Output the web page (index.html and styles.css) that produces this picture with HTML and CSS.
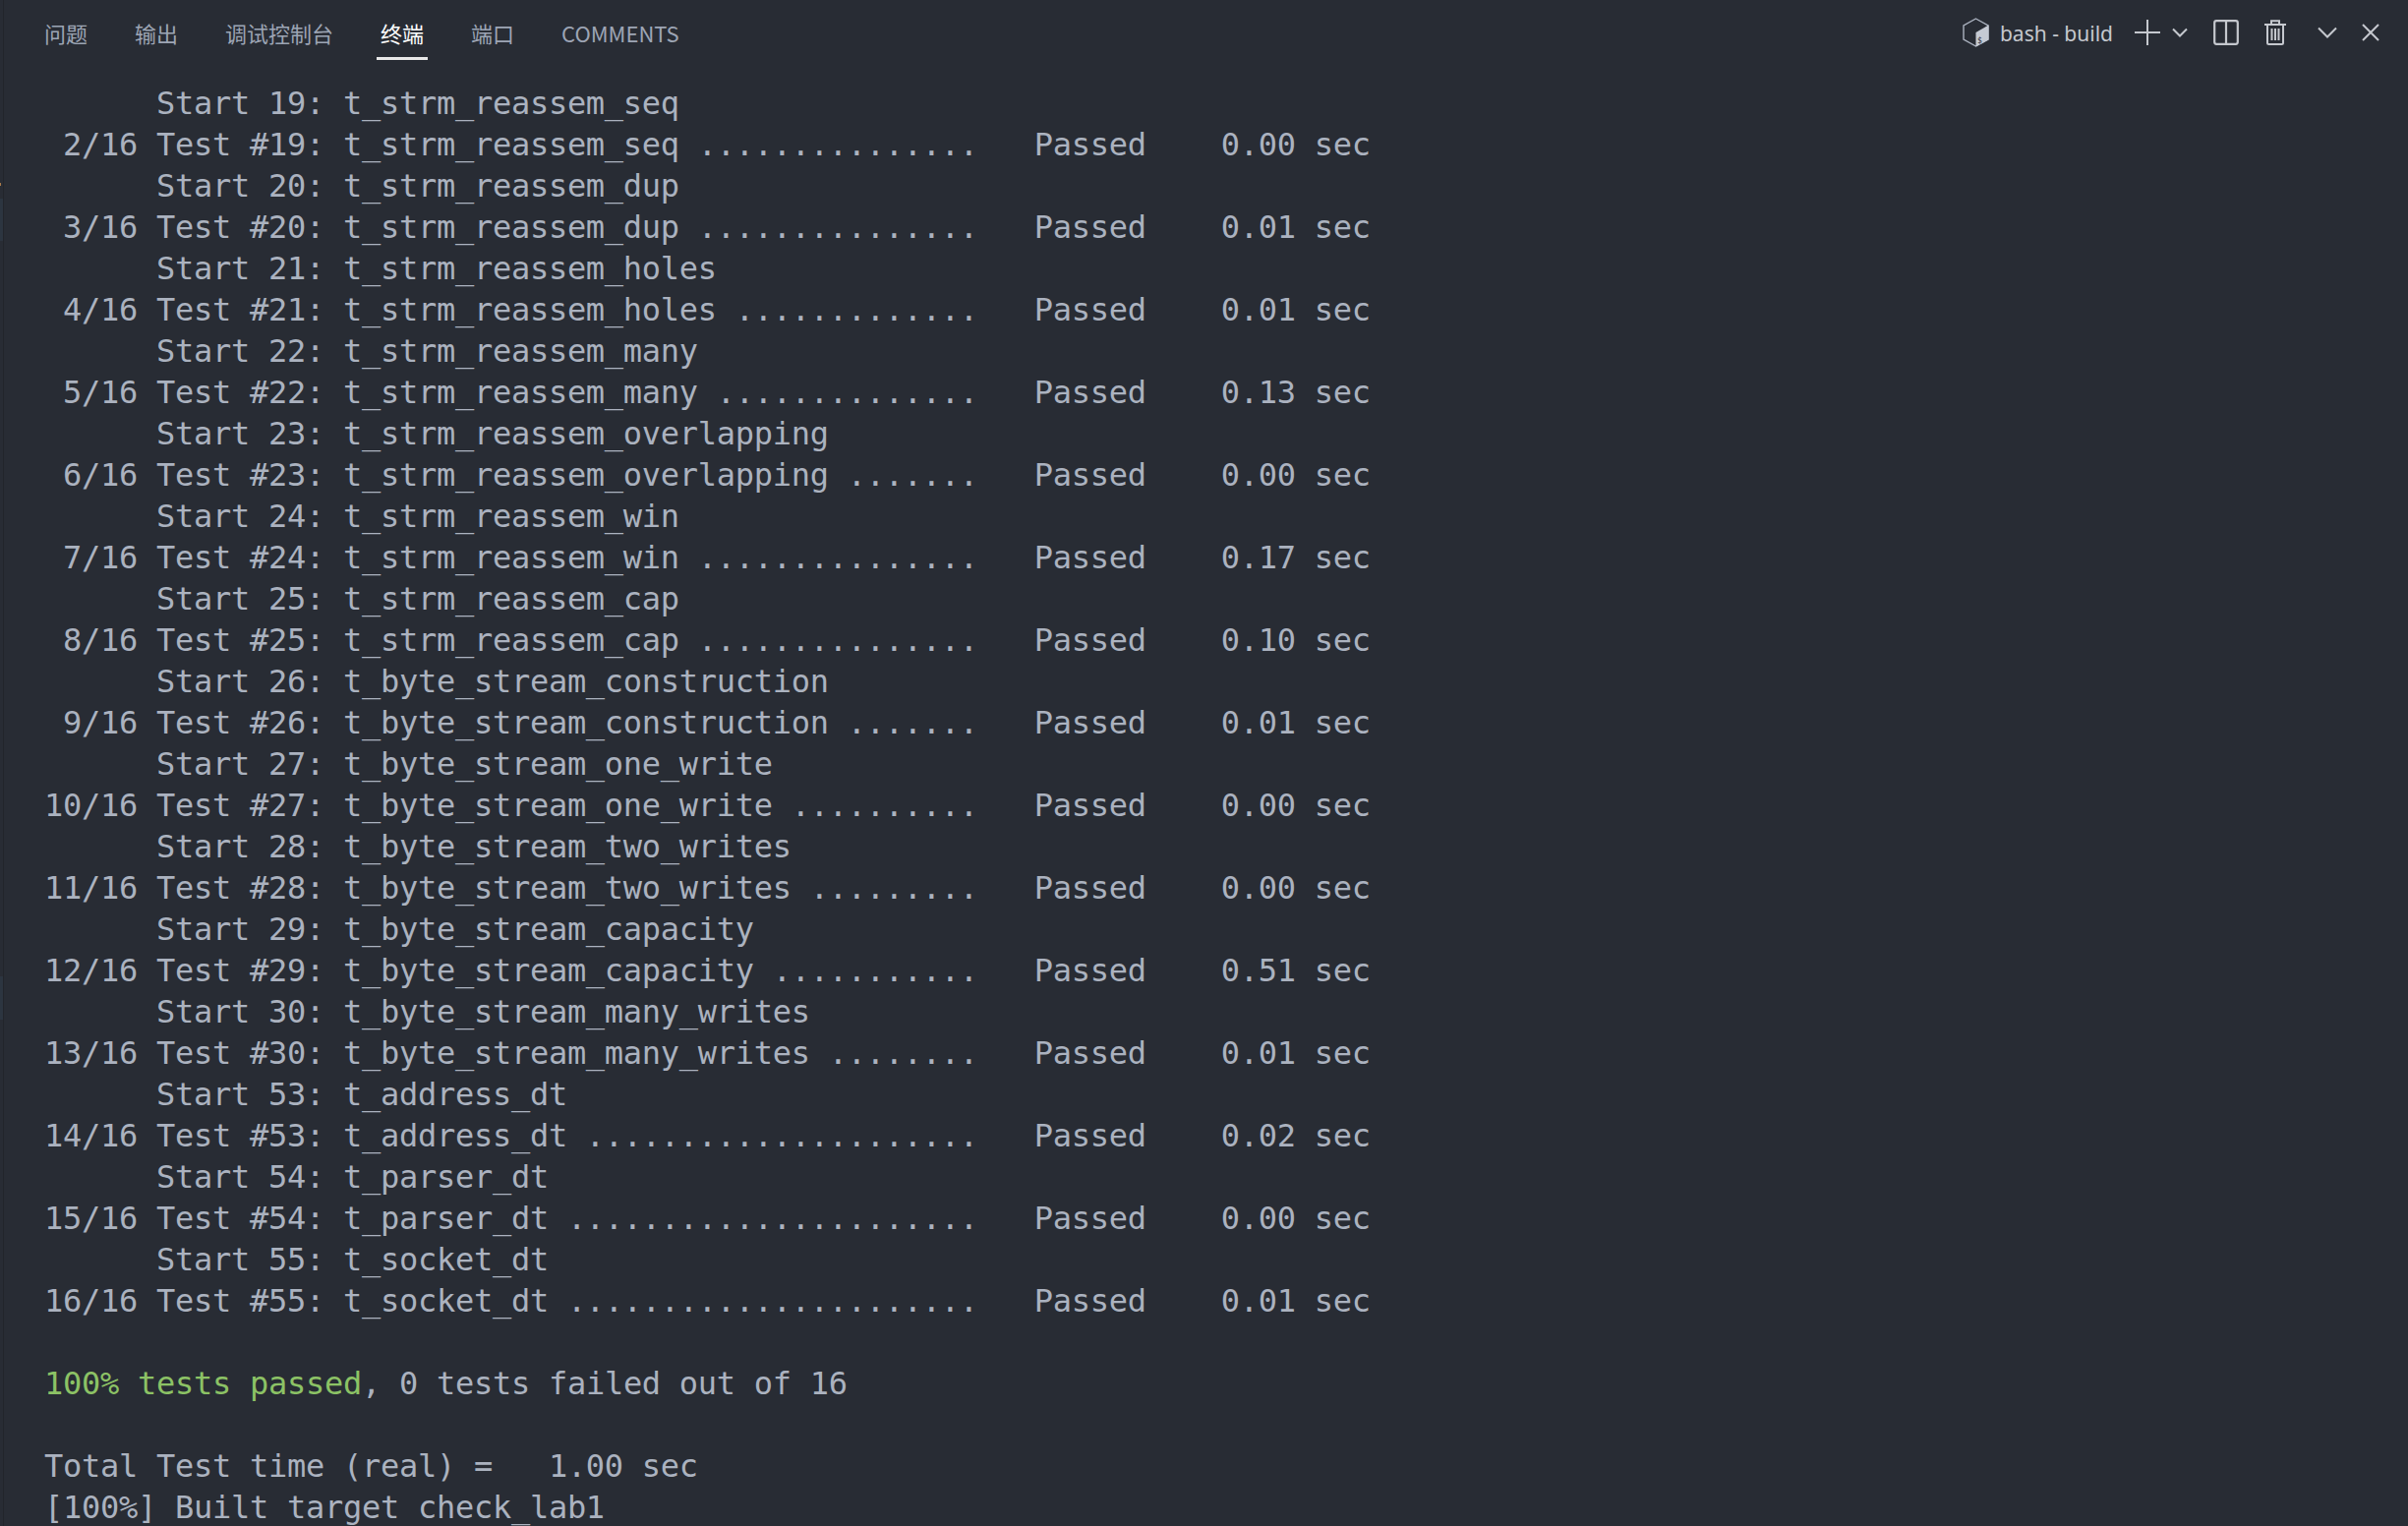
FILE: index.html
```html
<!DOCTYPE html>
<html lang="zh">
<head>
<meta charset="utf-8">
<title>Terminal</title>
<link rel="stylesheet" href="styles.css">
</head>
<body>
<i class="mark mark-tick"></i>
<i class="mark mark-a"></i>
<i class="mark mark-b"></i>
<div class="panel">
<header class="bar">
<nav class="tabs">
<span class="tab">问题</span>
<span class="tab">输出</span>
<span class="tab">调试控制台</span>
<span class="tab active">终端</span>
<span class="tab">端口</span>
<span class="tab">COMMENTS</span>
</nav>
<div class="actions">
<svg class="ic-bash" width="27" height="30" viewBox="0 0 27 30" fill="none"><path d="M13.500 1 L26 8 V22 L13.500 29 L1 22 V8 Z" stroke="#abb2bf" stroke-width="1.4"/><path d="M13.500 29.500 V15 L26.500 7.500 V22.500 Z" fill="#c5cad3"/><text x="15" y="25.500" class="ic-txt">$_</text></svg>
<span class="term-name">bash - build</span>
<svg class="ic-plus" width="26" height="26" viewBox="0 0 26 26" fill="none" stroke="#c5c8ce" stroke-width="2"><path d="M13 0V26M0 13H26"/></svg>
<svg class="ic-chev-s" width="16" height="10" viewBox="0 0 16 10" fill="none" stroke="#c5c8ce" stroke-width="2"><path d="M1 1.500L8 8.500L15 1.500"/></svg>
<svg class="ic-split" width="26" height="26" viewBox="0 0 26 26" fill="none" stroke="#c5c8ce" stroke-width="2.200"><rect x="1.200" y="1.200" width="23.600" height="23.600" rx="2"/><path d="M13 1V25"/></svg>
<svg class="ic-trash" width="22" height="26" viewBox="0 0 22 26" fill="none" stroke="#c5c8ce" stroke-width="2"><path d="M0 5H22M7 5V1.200H15V5M3 5V23.500Q3 25 4.500 25H17.500Q19 25 19 23.500V5M7.500 9V21M11 9V21M14.500 9V21"/></svg>
<svg class="ic-chev" width="20" height="12" viewBox="0 0 20 12" fill="none" stroke="#c5c8ce" stroke-width="2"><path d="M1 1.500L10 10.500L19 1.500"/></svg>
<svg class="ic-close" width="18" height="18" viewBox="0 0 18 18" fill="none" stroke="#c5c8ce" stroke-width="2"><path d="M1 1L17 17M17 1L1 17"/></svg>
</div>
</header>
<main class="term">
<div>      Start 19: t_strm_reassem_seq</div>
<div> 2/16 Test #19: t_strm_reassem_seq ...............   Passed    0.00 sec</div>
<div>      Start 20: t_strm_reassem_dup</div>
<div> 3/16 Test #20: t_strm_reassem_dup ...............   Passed    0.01 sec</div>
<div>      Start 21: t_strm_reassem_holes</div>
<div> 4/16 Test #21: t_strm_reassem_holes .............   Passed    0.01 sec</div>
<div>      Start 22: t_strm_reassem_many</div>
<div> 5/16 Test #22: t_strm_reassem_many ..............   Passed    0.13 sec</div>
<div>      Start 23: t_strm_reassem_overlapping</div>
<div> 6/16 Test #23: t_strm_reassem_overlapping .......   Passed    0.00 sec</div>
<div>      Start 24: t_strm_reassem_win</div>
<div> 7/16 Test #24: t_strm_reassem_win ...............   Passed    0.17 sec</div>
<div>      Start 25: t_strm_reassem_cap</div>
<div> 8/16 Test #25: t_strm_reassem_cap ...............   Passed    0.10 sec</div>
<div>      Start 26: t_byte_stream_construction</div>
<div> 9/16 Test #26: t_byte_stream_construction .......   Passed    0.01 sec</div>
<div>      Start 27: t_byte_stream_one_write</div>
<div>10/16 Test #27: t_byte_stream_one_write ..........   Passed    0.00 sec</div>
<div>      Start 28: t_byte_stream_two_writes</div>
<div>11/16 Test #28: t_byte_stream_two_writes .........   Passed    0.00 sec</div>
<div>      Start 29: t_byte_stream_capacity</div>
<div>12/16 Test #29: t_byte_stream_capacity ...........   Passed    0.51 sec</div>
<div>      Start 30: t_byte_stream_many_writes</div>
<div>13/16 Test #30: t_byte_stream_many_writes ........   Passed    0.01 sec</div>
<div>      Start 53: t_address_dt</div>
<div>14/16 Test #53: t_address_dt .....................   Passed    0.02 sec</div>
<div>      Start 54: t_parser_dt</div>
<div>15/16 Test #54: t_parser_dt ......................   Passed    0.00 sec</div>
<div>      Start 55: t_socket_dt</div>
<div>16/16 Test #55: t_socket_dt ......................   Passed    0.01 sec</div>
<div> </div>
<div><span class="ok">100% tests passed</span>, 0 tests failed out of 16</div>
<div> </div>
<div>Total Test time (real) =   1.00 sec</div>
<div>[100%] Built target check_lab1</div>
</main>
</div>
</body>
</html>
```

FILE: styles.css
```css
html, body { margin: 0; height: 100%; background: #282c34; overflow: hidden; }
.mark { position: absolute; left: 0; width: 3px; background: #2c3540; }
.mark-tick { top: 186px; height: 3px; width: 1px; background: #a87a4a; }
.mark-a { top: 202px; height: 43px; }
.mark-b { top: 993px; height: 44px; }
.panel { height: 100%; margin-left: 3px; display: flex; flex-direction: column; border-left: 1px solid #22252b; box-sizing: border-box; }
.bar { height: 84px; flex: none; display: flex; justify-content: space-between; align-items: flex-start; padding: 0 29px 0 41px; box-sizing: border-box; }
.tabs { display: flex; gap: 48px; font-family: "Noto Sans CJK SC", "Noto Sans", sans-serif; font-size: 22px; color: #9da5b4; }
.tab { height: 60px; line-height: 66px; }
.tab.active { color: #fff; position: relative; }
.tab.active::after { content: ""; position: absolute; left: -4px; right: -4px; top: 58px; height: 3px; background: #e8e8e8; }
.actions { display: flex; align-items: center; height: 66px; color: #c5c8ce; font-family: "Noto Sans", sans-serif; font-size: 21px; }
.ic-txt { font-family: "DejaVu Sans Mono", monospace; font-size: 8px; fill: #282c34; }
.term-name { margin-left: 11px; padding-top: 2px; }
.ic-plus { margin-left: 22px; }
.ic-chev-s { margin-left: 12px; }
.ic-split { margin-left: 26px; }
.ic-trash { margin-left: 26px; }
.ic-chev { margin-left: 32px; }
.ic-close { margin-left: 25px; }
.term { padding-left: 41px; font-family: "DejaVu Sans Mono", monospace; font-size: 32px; letter-spacing: -0.27px; line-height: 42px; color: #abb2bf; }
.term div { white-space: pre; }
.ok { color: #8cc265; }
```
